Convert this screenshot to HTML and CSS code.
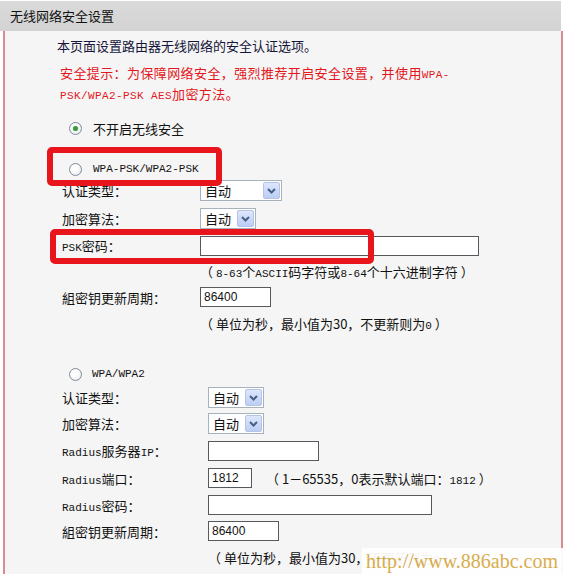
FILE: index.html
```html
<!DOCTYPE html>
<html lang="zh">
<head>
<meta charset="utf-8">
<link rel="stylesheet" href="styles.css">
</head>
<body>
<div class="page">
  <div class="hd">无线网络安全设置</div>
  <div class="panel">
    <p class="intro">本页面设置路由器无线网络的安全认证选项。</p>
    <p class="warn">安全提示：为保障网络安全，强烈推荐开启安全设置，并使用<span class="a">WPA-</span><br><span class="a">PSK/WPA2-PSK AES</span>加密方法。</p>

    <div class="radio-row r1"><span class="radio on"></span><span>不开启无线安全</span></div>
    <div class="radio-row r2"><span class="radio"></span><span class="a">WPA-PSK/WPA2-PSK</span></div>

    <div class="form form1">
      <span>认证类型：</span>
      <div class="sel w82"><span class="val">自动</span><span class="btn"><svg width="13" height="13" viewBox="0 0 13 13"><path d="M3 5 L6.5 8.5 L10 5" fill="none" stroke="#4a5d87" stroke-width="2"/></svg></span></div>
      <span>加密算法：</span>
      <div class="sel w56"><span class="val">自动</span><span class="btn"><svg width="13" height="13" viewBox="0 0 13 13"><path d="M3 5 L6.5 8.5 L10 5" fill="none" stroke="#4a5d87" stroke-width="2"/></svg></span></div>
      <span><span class="a">PSK</span>密码：</span>
      <div class="inp w279"></div>
      <span></span>
      <span class="hint">（ <span class="a">8-63</span>个<span class="a">ASCII</span>码字符或<span class="a">8-64</span>个十六进制字符 ）</span>
      <span>組密钥更新周期：</span>
      <div class="inp w71">86400</div>
      <span></span>
      <span class="hint">（ 单位为秒，最小值为30，不更新则为<span class="a">0</span> ）</span>
    </div>

    <div class="radio-row r3"><span class="radio"></span><span class="a">WPA/WPA2</span></div>

    <div class="form form2">
      <span>认证类型：</span>
      <div class="sel w56"><span class="val">自动</span><span class="btn"><svg width="13" height="13" viewBox="0 0 13 13"><path d="M3 5 L6.5 8.5 L10 5" fill="none" stroke="#4a5d87" stroke-width="2"/></svg></span></div>
      <span>加密算法：</span>
      <div class="sel w56"><span class="val">自动</span><span class="btn"><svg width="13" height="13" viewBox="0 0 13 13"><path d="M3 5 L6.5 8.5 L10 5" fill="none" stroke="#4a5d87" stroke-width="2"/></svg></span></div>
      <span><span class="a">Radius</span>服务器<span class="a">IP</span>：</span>
      <div class="inp w111"></div>
      <span><span class="a">Radius</span>端口：</span>
      <div class="port"><div class="inp w44">1812</div><span class="hint">（ 1－65535，0表示默认端口：<span class="a">1812</span> ）</span></div>
      <span><span class="a">Radius</span>密码：</span>
      <div class="inp w224"></div>
      <span>組密钥更新周期：</span>
      <div class="inp w71">86400</div>
      <span></span>
      <span class="hint">（ 单位为秒，最小值为30，不更新则为<span class="a">0</span> ）</span>
    </div>
  </div>

  <div class="hl hl1"></div>
  <div class="hl hl2"></div>
  <div class="wm">http://www.886abc.com</div>
</div>
</body>
</html>
```

FILE: styles.css
```css
html, body {
  margin: 0;
  padding: 0;
  background: #ffffff;
}
body {
  font-family: "Noto Sans CJK SC", "Noto Sans", sans-serif;
  font-size: 13px;
  color: #111;
}
.page {
  position: relative;
  width: 564px;
  height: 574px;
  overflow: hidden;
}
.hd {
  margin-top: 1px;
  width: 561px;
  height: 30px;
  line-height: 30px;
  padding-left: 10px;
  box-sizing: border-box;
  background: linear-gradient(#dadada, #d3d3d3);
  color: #111;
  font-size: 13px;
}
.panel {
  margin-left: 3px;
  width: 560px;
  height: 543px;
  box-sizing: border-box;
  border-left: 2px solid #d98c90;
  border-right: 2px solid #d98c90;
  background: #f5f5f5;
  padding-top: 5px;
}
.a {
  font-family: "Liberation Mono", monospace;
  font-size: 11px;
  line-height: 0;
}
.intro {
  margin: 0;
  padding-left: 52px;
  line-height: 20px;
  color: #16163a;
}
.warn {
  margin: 6px 0 0;
  padding-left: 55px;
  line-height: 21px;
  height: 42px;
  color: #e3171c;
  letter-spacing: 0.4px;
}
.radio-row {
  display: flex;
  align-items: center;
  height: 24px;
  padding-left: 64px;
  gap: 11px;
}
.r1 { margin-top: 12px; }
.r2 { margin-top: 17px; }
.r3 { margin-top: 26px; gap: 10px; }
.radio {
  width: 13px;
  height: 13px;
  box-sizing: border-box;
  border: 1px solid #7f8d99;
  border-radius: 50%;
  background: radial-gradient(circle at 40% 40%, #ffffff 30%, #dde2e7 100%);
  display: flex;
  align-items: center;
  justify-content: center;
}
.radio.on::after {
  content: "";
  width: 5px;
  height: 5px;
  border-radius: 50%;
  background: #3c9b3c;
  box-shadow: 0 0 1px #8fd08f;
}
.form {
  display: grid;
  align-items: center;
  padding-left: 57px;
}
.form1 {
  margin-top: -4px;
  grid-template-columns: 138px auto;
  grid-template-rows: 27px 28px 27px 25px 26px 26px;
}
.form2 {
  margin-top: -2px;
  grid-template-columns: 146px auto;
  grid-template-rows: 26px 27px 27px 28px 26px 26px 26px;
}
.form > * {
  justify-self: start;
}
.sel {
  display: flex;
  align-items: center;
  justify-content: space-between;
  height: 21px;
  box-sizing: border-box;
  border: 1px solid #a8b2bc;
  background: #fff;
  padding: 0 1px 0 4px;
}
.sel .val {
  line-height: 19px;
}
.sel .btn {
  width: 17px;
  height: 17px;
  box-sizing: border-box;
  border: 1px solid #b4c4e6;
  border-radius: 2px;
  background: linear-gradient(#dde7fc, #bccdf4);
  display: flex;
  align-items: center;
  justify-content: center;
}
.w82 { width: 82px; }
.w56 { width: 56px; }
.inp {
  height: 20px;
  box-sizing: border-box;
  border: 1px solid #55585c;
  background: #fff;
  font-family: "Liberation Sans", Arial, sans-serif;
  font-size: 12px;
  line-height: 18px;
  padding-left: 3px;
  color: #111;
}
.w279 { width: 279px; }
.w71 { width: 71px; }
.w111 { width: 111px; }
.w44 { width: 44px; }
.w224 { width: 224px; }
.hint {
  color: #111;
}
.port {
  display: flex;
  align-items: center;
  gap: 14px;
}
.hl {
  position: absolute;
  border: 6px solid #e8161c;
  border-radius: 5px;
  box-sizing: border-box;
}
.hl1 {
  left: 47px;
  top: 147px;
  width: 175px;
  height: 39px;
}
.hl2 {
  left: 50px;
  top: 229px;
  width: 324px;
  height: 35px;
}
.wm {
  position: absolute;
  right: 0;
  bottom: 0;
  width: 202px;
  height: 26px;
  background: #fff;
  color: #d8aa45;
  font-family: "Liberation Serif", serif;
  font-size: 20px;
  line-height: 26px;
  padding-left: 4px;
  box-sizing: border-box;
  opacity: 0.95;
}
```
